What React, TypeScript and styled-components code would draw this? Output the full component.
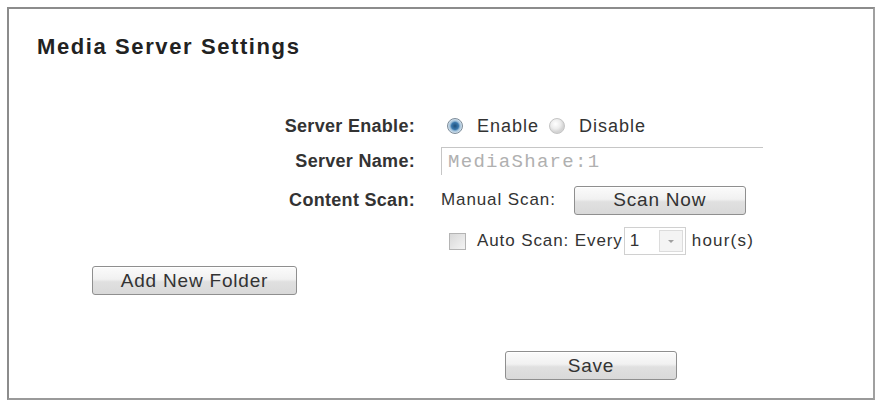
import React, { useState } from 'react';
import styled, { createGlobalStyle } from 'styled-components';

const GlobalStyle = createGlobalStyle`
  html, body {
    margin: 0;
    padding: 0;
    background: #ffffff;
  }
  body {
    font-family: "Liberation Sans", Arial, sans-serif;
    color: #333333;
  }
`;

const Page = styled.div`
  width: 878px;
  height: 403px;
  padding: 7px 3px 3px 7px;
  box-sizing: border-box;
`;

const Panel = styled.div`
  height: 393px;
  box-sizing: border-box;
  border: 2px solid #8c8c8c;
  border-right-color: #a0a0a0;
  border-bottom-color: #9a9a9a;
  padding: 25px 0 0 28px;
`;

const Title = styled.h1`
  margin: 0;
  font-size: 22px;
  line-height: 26px;
  font-weight: bold;
  letter-spacing: 1.6px;
  color: #222222;
`;

const Form = styled.div`
  display: grid;
  grid-template-columns: 378px auto;
  grid-template-rows: 35px 39px 41px 28px;
  column-gap: 26px;
  margin-top: 52px;
  align-items: start;
`;

const Label = styled.div`
  height: 28px;
  display: flex;
  align-items: center;
  justify-content: flex-end;
  font-size: 18px;
  font-weight: bold;
  letter-spacing: 0.3px;
  color: #333333;
`;

const Controls = styled.div`
  height: 28px;
  display: flex;
  align-items: center;
  font-size: 17px;
  letter-spacing: 0.9px;
  color: #333333;
  white-space: nowrap;
`;

const RadioDot = styled.span<{ $checked?: boolean }>`
  width: 16px;
  height: 16px;
  border-radius: 50%;
  box-sizing: border-box;
  border: 1px solid ${(p) => (p.$checked ? '#7d8c99' : '#c4c4c4')};
  background: ${(p) =>
    p.$checked
      ? 'radial-gradient(circle at 50% 50%, #1f4f7a 0, #3a78ad 3.5px, #9fbfd8 5px, #e4edf5 7.5px)'
      : 'radial-gradient(circle at 40% 35%, #ffffff 0, #ececec 5px, #d4d4d4 8px)'};
  display: inline-block;
`;

const RadioOption = styled.label<{ $before: number }>`
  display: flex;
  align-items: center;
  gap: 14px;
  margin-left: ${(p) => p.$before}px;
  font-size: 18px;
  letter-spacing: 1px;
  cursor: pointer;
`;

const TextInput = styled.input`
  width: 322px;
  height: 28px;
  box-sizing: border-box;
  border: none;
  border-top: 1px solid #c6c6c6;
  border-left: 1px solid #c6c6c6;
  padding: 0 0 0 6px;
  font-family: "Liberation Mono", "Courier New", monospace;
  font-size: 19px;
  letter-spacing: 1.3px;
  color: #b0b0b0;
  background: #ffffff;
  outline: none;
`;

const Button = styled.button<{ $width: number }>`
  width: ${(p) => p.$width}px;
  height: 29px;
  box-sizing: border-box;
  border: 1px solid #8f8f8f;
  border-radius: 3px;
  background: linear-gradient(#fbfbfb 0%, #f1f1f1 45%, #e0e0e0 55%, #d9d9d9 100%);
  box-shadow: inset 0 1px 0 #ffffff;
  font-family: "Liberation Sans", Arial, sans-serif;
  font-size: 19px;
  letter-spacing: 0.8px;
  color: #333333;
  padding: 0;
  cursor: pointer;
`;

const ScanButton = styled(Button)`
  margin-left: 18px;
`;

const CheckBox = styled.span`
  width: 17px;
  height: 17px;
  box-sizing: border-box;
  border: 1px solid #b4b4b4;
  background: linear-gradient(135deg, #d8d8d8, #f4f4f4);
  margin-left: 8px;
  margin-right: 11px;
  display: inline-block;
`;

const Select = styled.div`
  width: 62px;
  height: 28px;
  box-sizing: border-box;
  border: 1px solid #d0d0d0;
  margin-left: 1px;
  display: flex;
  align-items: stretch;
  background: #ffffff;
`;

const SelectValue = styled.span`
  flex: 1;
  padding-left: 5px;
  display: flex;
  align-items: center;
`;

const SelectArrow = styled.span`
  width: 22px;
  margin: 2px;
  border: 1px solid #dcdcdc;
  background: #f4f4f4;
  display: flex;
  align-items: center;
  justify-content: center;

  &::after {
    content: '';
    border-left: 3px solid transparent;
    border-right: 3px solid transparent;
    border-top: 3px solid #a0a0a0;
  }
`;

const Unit = styled.span`
  margin-left: 6px;
  letter-spacing: 1.2px;
`;

const FolderRow = styled.div`
  margin: 11px 0 0 55px;
`;

const SaveRow = styled.div`
  margin: 56px 0 0 468px;
`;

const App: React.FC = () => {
  const [enabled, setEnabled] = useState<boolean>(true);

  return (
    <Page>
      <GlobalStyle />
      <Panel>
        <Title>Media Server Settings</Title>
        <Form>
          <Label>Server Enable:</Label>
          <Controls>
            <RadioOption $before={6} onClick={() => setEnabled(true)}>
              <RadioDot $checked={enabled} />
              Enable
            </RadioOption>
            <RadioOption $before={10} onClick={() => setEnabled(false)}>
              <RadioDot $checked={!enabled} />
              Disable
            </RadioOption>
          </Controls>

          <Label>Server Name:</Label>
          <Controls>
            <TextInput defaultValue="MediaShare:1" />
          </Controls>

          <Label>Content Scan:</Label>
          <Controls>
            Manual Scan:
            <ScanButton $width={172}>Scan Now</ScanButton>
          </Controls>

          <span />
          <Controls>
            <CheckBox />
            Auto Scan: Every
            <Select>
              <SelectValue>1</SelectValue>
              <SelectArrow />
            </Select>
            <Unit>hour(s)</Unit>
          </Controls>
        </Form>

        <FolderRow>
          <Button $width={205}>Add New Folder</Button>
        </FolderRow>

        <SaveRow>
          <Button $width={172}>Save</Button>
        </SaveRow>
      </Panel>
    </Page>
  );
};

export default App;
